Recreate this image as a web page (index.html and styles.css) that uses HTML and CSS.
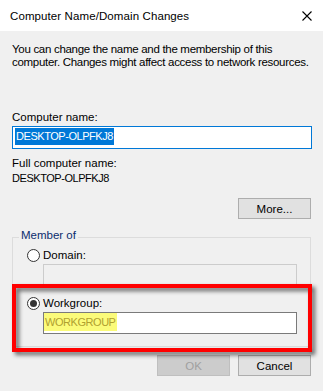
FILE: index.html
```html
<!DOCTYPE html>
<html>
<head>
<meta charset="utf-8">
<link rel="stylesheet" href="styles.css">
</head>
<body>
<div class="window">
  <div class="titlebar">
    <span class="title">Computer Name/Domain Changes</span>
    <svg class="close" width="10" height="10" viewBox="0 0 10 10"><path d="M0.5 0.5 L9.5 9.5 M9.5 0.5 L0.5 9.5" stroke="#000" stroke-width="1.1" fill="none"/></svg>
  </div>
  <div class="content">
    <p class="intro">You can change the name and the membership of this<br>computer. Changes might affect access to network resources.</p>
    <div class="label name-label">Computer name:</div>
    <div class="field focused"><span class="sel caps">DESKTOP-OLPFKJ8</span></div>
    <div class="label full-label">Full computer name:</div>
    <div class="label full-value caps">DESKTOP-OLPFKJ8</div>
    <div class="more-row"><button class="btn">More...</button></div>
    <fieldset class="group">
      <legend>Member of</legend>
      <div class="group-body">
        <div class="radio-row domain-row"><span class="radio"></span><span>Domain:</span></div>
        <div class="field disabled sub"></div>
        <div class="radio-row wg-row"><span class="radio checked"></span><span>Workgroup:</span></div>
        <div class="field sub wg"><span class="hl caps">WORKGROUP</span></div>
      </div>
    </fieldset>
    <div class="actions">
      <button class="btn disabled-btn">OK</button>
      <button class="btn">Cancel</button>
    </div>
  </div>
  <div class="annot"></div>
</div>
</body>
</html>
```
FILE: styles.css
```css
* { box-sizing: border-box; }
html, body { margin: 0; padding: 0; }
body {
  font-family: "Liberation Sans", Arial, sans-serif;
  font-size: 11.5px;
  color: #000;
  background: #f0f0f0;
}
.window {
  position: relative;
  width: 323px;
  height: 391px;
  background: #f0f0f0;
  overflow: hidden;
}
.titlebar {
  height: 31px;
  background: #fff;
  display: flex;
  align-items: center;
  justify-content: space-between;
  padding: 0 11px 0 10px;
}
.title { font-size: 11.5px; line-height: 14px; margin-top: 1px; white-space: nowrap; letter-spacing: 0.1px; }
.close { display: block; }
.content {
  padding: 0 11px 0 12px;
}
.intro {
  margin: 12px 0 0;
  line-height: 13px;
  white-space: nowrap;
  letter-spacing: -0.3px;
}
.label { line-height: 13px; white-space: nowrap; }
.caps { font-size: 11px; letter-spacing: -0.45px; }
.name-label { margin-top: 42px; }
.field {
  height: 23px;
  margin-top: 2px;
  background: #fff;
  border: 1px solid #7a7a7a;
  padding: 1px 2px;
  white-space: nowrap;
}
.field.focused { border-color: #0078d7; }
.sel {
  display: inline-block;
  background: #0078d7;
  color: #fff;
  line-height: 17px;
  padding: 0 1px;
}
.full-label { margin-top: 8px; }
.full-value { margin-top: 2px; }
.more-row {
  display: flex;
  justify-content: flex-end;
  margin-top: 13px;
  padding-right: 1px;
}
.btn {
  font-family: inherit;
  font-size: 11.5px;
  width: 73px;
  height: 21px;
  padding: 0;
  background: #e1e1e1;
  border: 1px solid #adadad;
  color: #000;
}
.disabled-btn {
  background: #cccccc;
  border-color: #bfbfbf;
  color: #a0a0a0;
}
.group {
  margin: 10px 1px 0 0;
  padding: 0 0 12px 0;
  border: 1px solid #dcdcdc;
  min-width: 0;
}
.group legend {
  margin-left: 6px;
  padding: 0 2px 4px;
  line-height: 13px;
  color: #0b2d6e;
}
.group-body { padding-left: 14px; }
.radio-row {
  display: flex;
  align-items: center;
  gap: 3px;
  height: 13px;
  line-height: 13px;
}
.domain-row { margin-top: 3px; }
.wg-row { margin-top: 12px; }
.radio {
  width: 13px;
  height: 13px;
  border-radius: 50%;
  border: 1px solid #333;
  background: #fff;
  display: flex;
  align-items: center;
  justify-content: center;
  flex: none;
}
.radio.checked::after {
  content: "";
  width: 7px;
  height: 7px;
  border-radius: 50%;
  background: #333;
}
.field.sub {
  margin-left: 16px;
  width: 254px;
}
.field.disabled {
  height: 21px;
  background: #f0f0f0;
  border-color: #cccccc;
}
.field.wg { height: 22px; padding-left: 0; }
.hl {
  display: inline-block;
  background: #fbfb7a;
  color: #b0a030;
  line-height: 18px;
  padding: 0 1px;
  margin-top: -1px;
}
.actions {
  display: flex;
  justify-content: flex-end;
  gap: 8px;
  margin-top: 8px;
  padding-right: 1px;
}
.annot {
  position: absolute;
  left: 12px;
  top: 284px;
  width: 300px;
  height: 68px;
  border: 4.5px solid #ff0000;
  filter: drop-shadow(3px 3px 2px rgba(0,0,0,0.6));
}
```
